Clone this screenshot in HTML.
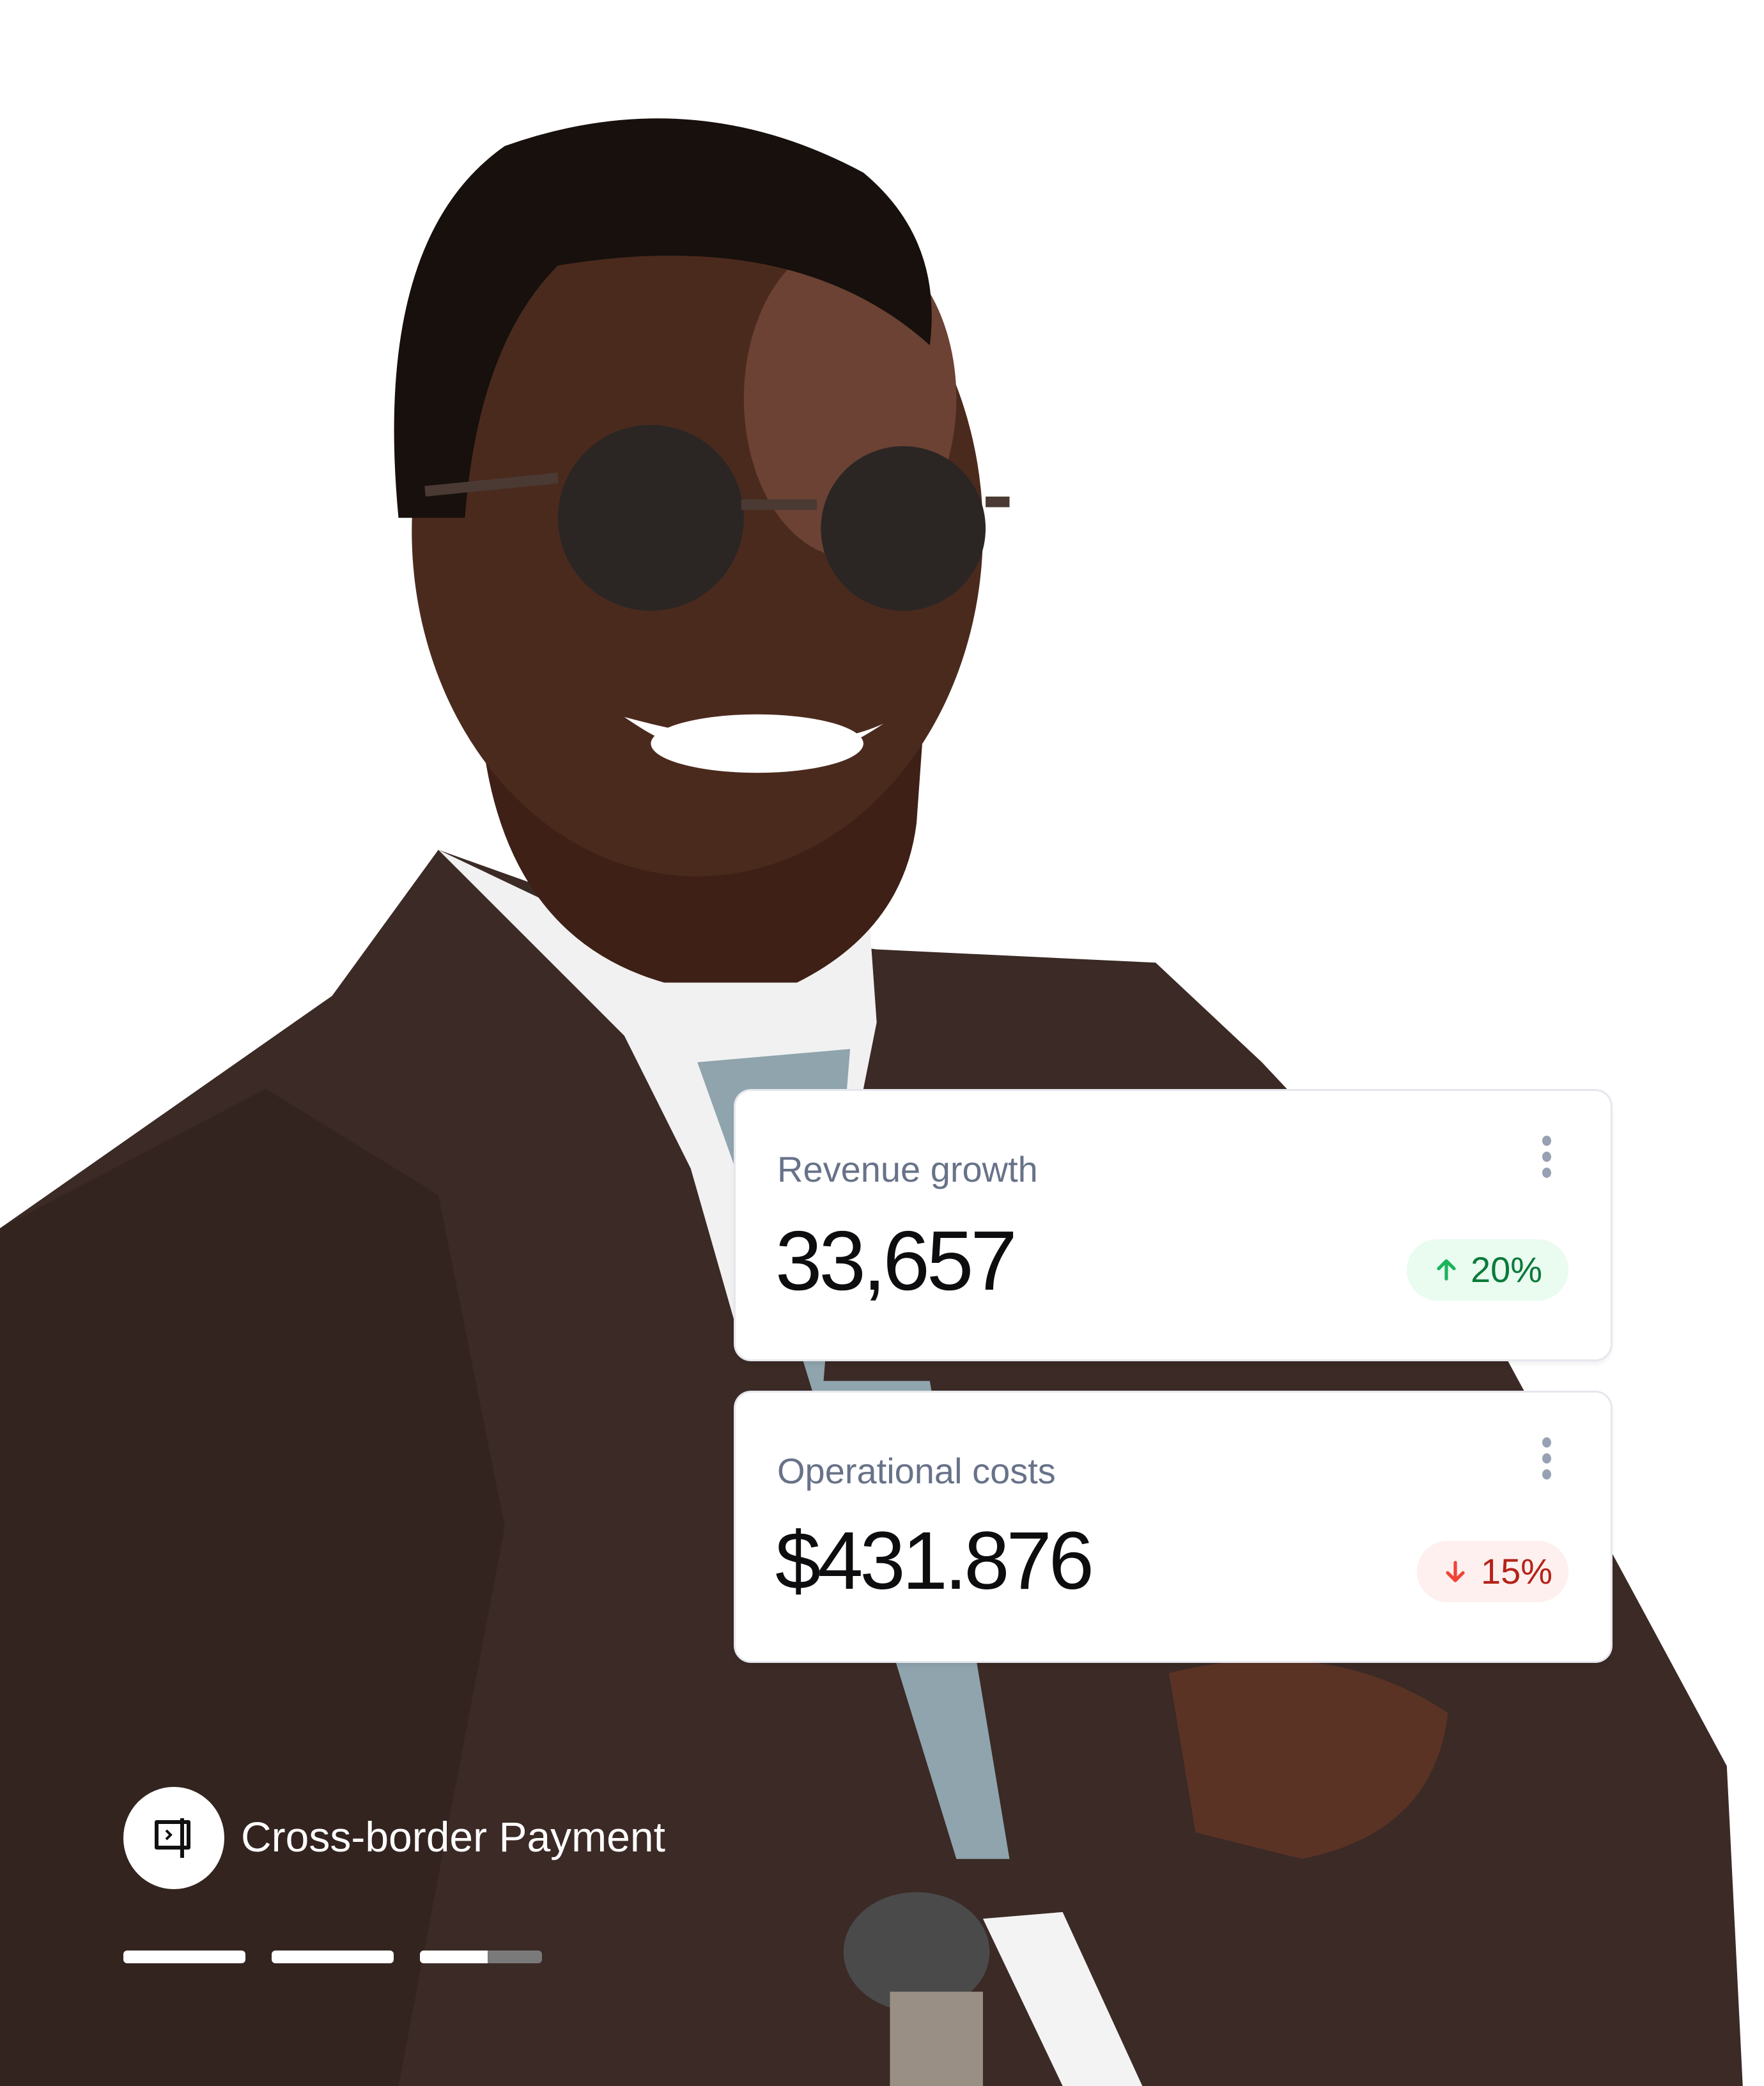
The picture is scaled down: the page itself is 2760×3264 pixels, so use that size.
<!DOCTYPE html>
<html><head><meta charset="utf-8"><style>
html,body{margin:0;padding:0;background:#fff;}
body{width:2760px;height:3264px;position:relative;overflow:hidden;font-family:"Liberation Sans",sans-serif;}
svg.bg{position:absolute;left:0;top:0;width:2760px;height:3264px;}
.card{position:absolute;left:1151px;width:1369px;height:420px;background:#fff;border-radius:24px;box-shadow:0 0 0 3px #e6e7ee,0 6px 10px rgba(0,0,0,.08);}
.lbl{position:absolute;left:65px;top:90px;font-size:56px;color:#687289;}
.val{position:absolute;left:62px;top:190px;font-size:132px;color:#0d0d10;letter-spacing:-5px;}
.dots{position:absolute;left:1262px;top:70px;width:14px;}
.dots i{display:block;width:14px;height:16px;border-radius:50%;background:#98a0b3;margin-bottom:9px;}
.badge{position:absolute;top:232px;height:96px;border-radius:48px;font-size:56px;line-height:96px;}
.circ{position:absolute;left:193px;top:2796px;width:158px;height:160px;border-radius:50%;background:#fff;}
.cbp{position:absolute;left:377px;top:2836px;font-size:66px;color:#fff;letter-spacing:0px;}
.bar{position:absolute;top:3052px;height:20px;width:191px;border-radius:6px;background:#fff;}
</style></head><body>
<svg class="bg" viewBox="0 0 1328 1571" preserveAspectRatio="none">
<polygon points="0,925 250,750 330,640 470,690 660,715 870,725 950,800 1100,960 1230,1200 1300,1330 1312,1571 0,1571" fill="#3b2a25"/>
<polygon points="0,925 200,820 330,900 380,1150 300,1571 0,1571" fill="#33241f"/>
<polygon points="330,640 470,780 520,880 560,1020 610,1020 660,770 655,700 540,740" fill="#f1f1f1"/>
<polygon points="525,800 640,790 620,1040 700,1040 760,1400 720,1400 600,1010" fill="#8fa4ad"/>
<path d="M360,500 Q360,700 500,740 L600,740 Q680,700 690,620 L700,480 Z" fill="#3e2016"/>
<ellipse cx="525" cy="400" rx="215" ry="260" fill="#4b2a1e"/>
<ellipse cx="640" cy="300" rx="80" ry="120" fill="#6b4233"/>
<path d="M300,390 Q280,180 380,110 Q520,60 650,130 Q710,180 700,260 Q600,170 420,200 Q360,260 350,390 Z" fill="#17100d"/>
<circle cx="490" cy="390" r="70" fill="#2b2624"/>
<circle cx="680" cy="398" r="62" fill="#2b2624"/>
<path d="M320,370 L420,360 M558,380 L615,380 M742,378 L760,378" stroke="#4a3a33" stroke-width="8"/>
<path d="M470,540 Q570,610 665,545 Q600,575 470,540 Z" fill="#fff"/>
<ellipse cx="570" cy="560" rx="80" ry="22" fill="#fff"/>
<path d="M880,1260 Q1000,1230 1090,1290 Q1080,1380 980,1400 L900,1380 Z" fill="#5a3325"/>
<path d="M740,1445 L800,1440 L860,1571 L800,1571 Z" fill="#f3f3f3"/>
<ellipse cx="690" cy="1470" rx="55" ry="45" fill="#4a4a4a"/>
<rect x="670" y="1500" width="70" height="71" fill="#9a8f85"/>
</svg>

<div class="card" style="top:1707px">
 <div class="lbl">Revenue growth</div>
 <div class="dots"><i></i><i></i><i></i></div>
 <div class="val">33,657</div>
 <div class="badge" style="left:1050px;width:253px;background:#eafbf0;color:#0a7a3a;">
  <svg style="position:absolute;left:42px;top:28px" width="40" height="40" viewBox="0 0 20 20"><path d="M10 17V3M4 9l6-6 6 6" stroke="#1cb35a" stroke-width="2.6" fill="none" stroke-linecap="round" stroke-linejoin="round"/></svg>
  <span style="position:absolute;left:100px">20%</span></div>
</div>
<div class="card" style="top:2179px">
 <div class="lbl">Operational costs</div>
 <div class="dots"><i></i><i></i><i></i></div>
 <div class="val" style="font-size:128px">$431.876</div>
 <div class="badge" style="left:1066px;width:237px;background:#fdf0ef;color:#b42318;">
  <svg style="position:absolute;left:40px;top:28px" width="40" height="40" viewBox="0 0 20 20"><path d="M10 3v14M4 11l6 6 6-6" stroke="#f04438" stroke-width="2.6" fill="none" stroke-linecap="round" stroke-linejoin="round"/></svg>
  <span style="position:absolute;left:100px">15%</span></div>
</div>

<div class="circ"><svg style="position:absolute;left:44px;top:45px" width="72" height="72" viewBox="0 0 72 72"><path d="M46 10H8v40h38M48 4v62M50 10h8v40h-8" stroke="#111" stroke-width="6" fill="none" stroke-linejoin="round"/><path d="M23 23l7 7-7 7" stroke="#111" stroke-width="4" fill="none"/></svg></div>
<div class="cbp">Cross-border Payment</div>
<div class="bar" style="left:193px"></div>
<div class="bar" style="left:425px"></div>
<div class="bar" style="left:657px;background:#7a7a7a;overflow:hidden"><div style="width:106px;height:20px;background:#fff"></div></div>
</body></html>
